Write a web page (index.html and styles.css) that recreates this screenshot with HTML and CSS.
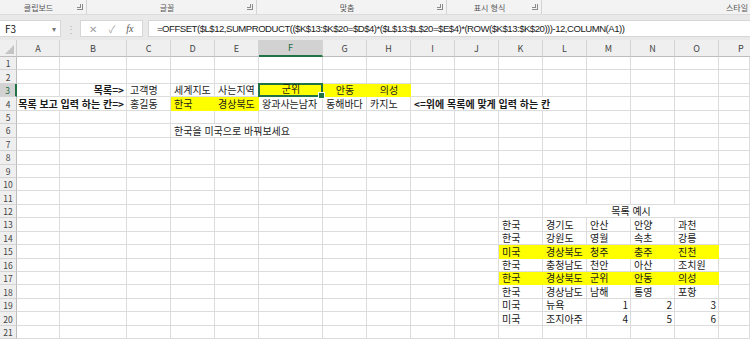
FILE: index.html
```html
<!DOCTYPE html>
<html lang="ko">

<head>
    <meta charset="UTF-8">
    <meta name="viewport" content="width=device-width, initial-scale=1.0">
    <title>통합 문서</title>
    <link rel="stylesheet" href="styles.css">
</head>

<body>
    <div class="ribbon">
        <div class="group group-clipboard"><span class="group-label">클립보드</span><span class="launcher"></span></div>
        <div class="group group-font"><span class="group-label">글꼴</span><span class="launcher"></span></div>
        <div class="group group-align"><span class="group-label">맞춤</span><span class="launcher"></span></div>
        <div class="group group-number"><span class="group-label">표시 형식</span><span class="launcher"></span></div>
        <div class="group group-style"><span class="group-label">스타일</span></div>
    </div>

    <div class="formula-bar">
        <div class="name-box">F3<span class="caret">▾</span></div>
        <div class="grip">⋮</div>
        <div class="fx-buttons">
            <span class="fx-btn">✕</span>
            <span class="fx-btn">✓</span>
            <span class="fx-btn fx-italic">fx</span>
        </div>
        <div class="formula">=OFFSET($L$12,SUMPRODUCT(($K$13:$K$20=$D$4)*($L$13:$L$20=$E$4)*(ROW($K$13:$K$20)))-12,COLUMN(A1))</div>
    </div>

    <div id="sheet" class="sheet"></div>

    <script>
        document.addEventListener('DOMContentLoaded', () => {
            const sheet = document.getElementById('sheet');
            const columns = ['A', 'B', 'C', 'D', 'E', 'F', 'G', 'H', 'I', 'J', 'K', 'L', 'M', 'N', 'O', 'P'];
            const rowCount = 21;

            // 셀 데이터: [열 번호, 텍스트, 병합 칸 수, 추가 클래스]
            const data = {
                3: [[1, '목록=>', 1, 'bold right'], [2, '고객명'], [3, '세계지도'], [4, '사는지역'],
                    [5, '군위', 1, 'yellow center active'], [6, '안동', 1, 'yellow center'], [7, '의성', 1, 'yellow center']],
                4: [[0, '목록 보고 입력 하는 칸=>', 2, 'bold right'], [2, '홍길동'], [3, '한국', 1, 'yellow'],
                    [4, '경상북도', 1, 'yellow'], [5, '왕과사는남자'], [6, '동해바다'], [7, '카지노'],
                    [8, '<=위에 목록에 맞게 입력 하는 칸', 4, 'bold']],
                6: [[3, '한국을 미국으로 바꿔보세요', 3]],
                12: [[11, '목록 예시', 4, 'center']],
                13: [[10, '한국'], [11, '경기도'], [12, '안산'], [13, '안양'], [14, '과천']],
                14: [[10, '한국'], [11, '강원도'], [12, '영월'], [13, '속초'], [14, '강릉']],
                15: [[10, '미국', 1, 'yellow'], [11, '경상북도', 1, 'yellow'], [12, '청주', 1, 'yellow'], [13, '충주', 1, 'yellow'], [14, '진천', 1, 'yellow']],
                16: [[10, '한국'], [11, '충청남도'], [12, '천안'], [13, '아산'], [14, '조치원']],
                17: [[10, '한국', 1, 'yellow'], [11, '경상북도', 1, 'yellow'], [12, '군위', 1, 'yellow'], [13, '안동', 1, 'yellow'], [14, '의성', 1, 'yellow']],
                18: [[10, '한국'], [11, '경상남도'], [12, '남해'], [13, '통영'], [14, '포항']],
                19: [[10, '미국'], [11, '뉴욕'], [12, '1', 1, 'right'], [13, '2', 1, 'right'], [14, '3', 1, 'right']],
                20: [[10, '미국'], [11, '조지아주'], [12, '4', 1, 'right'], [13, '5', 1, 'right'], [14, '6', 1, 'right']]
            };

            const corner = document.createElement('div');
            corner.className = 'corner';
            sheet.appendChild(corner);

            columns.forEach(letter => {
                const head = document.createElement('div');
                head.className = 'col-head' + (letter === 'F' ? ' selected' : '') + (letter === 'P' ? ' clipped' : '');
                head.textContent = letter;
                sheet.appendChild(head);
            });

            for (let r = 1; r <= rowCount; r++) {
                const rowHead = document.createElement('div');
                rowHead.className = 'row-head' + (r === 3 ? ' selected' : '');
                rowHead.textContent = r;
                sheet.appendChild(rowHead);

                const cells = data[r] || [];
                let c = 0;
                while (c < columns.length) {
                    const found = cells.find(item => item[0] === c);
                    const cell = document.createElement('div');
                    cell.className = 'cell';
                    let span = 1;
                    if (found) {
                        span = found[2] || 1;
                        const text = document.createElement('span');
                        text.className = 'value';
                        text.textContent = found[1];
                        cell.appendChild(text);
                        if (found[3]) {
                            found[3].split(' ').forEach(cls => cell.classList.add(cls));
                        }
                        if (span > 1) {
                            cell.style.gridColumn = 'span ' + span;
                        }
                    }
                    sheet.appendChild(cell);
                    c += span;
                }
            }
        });
    </script>
</body>

</html>
```

FILE: styles.css
```css
* {
    box-sizing: border-box;
}

body {
    margin: 0;
    width: 750px;
    height: 339px;
    overflow: hidden;
    background-color: #e9e9e9;
    font-family: "Noto Sans CJK KR", "Noto Sans", sans-serif;
    color: #1a1a1a;
}

/* 리본 하단 그룹 이름 */
.ribbon {
    display: flex;
    height: 15px;
    background-color: #f3f3f3;
    border-bottom: 1px solid #dcdcdc;
    white-space: nowrap;
}

.group {
    display: flex;
    flex-shrink: 0;
    align-items: center;
    height: 14px;
    border-right: 1px solid #d4d4d4;
    padding-right: 3px;
}

.group-label {
    flex: 1;
    text-align: center;
    font-size: 8px;
    color: #555;
}

.launcher {
    width: 6px;
    height: 6px;
    border-right: 1px solid #8a8a8a;
    border-bottom: 1px solid #8a8a8a;
    position: relative;
}

.launcher::before {
    content: "";
    position: absolute;
    left: 0;
    top: 0;
    width: 3px;
    height: 3px;
    border-right: 1px solid #8a8a8a;
    border-bottom: 1px solid #8a8a8a;
}

.group-clipboard {
    width: 87px;
}

.group-font {
    width: 170px;
}

.group-align {
    width: 190px;
}

.group-number {
    width: 95px;
}

.group-style {
    flex: 1;
    flex-shrink: 1;
    min-width: 0;
    border-right: none;
    padding-right: 2px;
}

.group-style .group-label {
    text-align: right;
}

/* 수식 입력줄 */
.formula-bar {
    display: flex;
    align-items: center;
    height: 25px;
    padding: 5px 0 3px;
}

.name-box {
    display: flex;
    align-items: center;
    justify-content: space-between;
    width: 61px;
    height: 17px;
    padding: 0 4px 0 5px;
    background-color: #fff;
    border: 1px solid #d6d6d6;
    border-left: none;
    font-size: 10px;
}

.caret {
    font-size: 8px;
    color: #777;
}

.grip {
    width: 19px;
    text-align: center;
    font-size: 10px;
    color: #b0b0b0;
}

.fx-buttons {
    display: flex;
    align-items: center;
    justify-content: space-around;
    width: 63px;
    height: 17px;
    padding: 0 3px;
    background-color: #fff;
    border: 1px solid #d6d6d6;
    font-size: 10px;
    color: #a0a0a0;
}

.fx-italic {
    font-family: "Liberation Serif", serif;
    font-style: italic;
    color: #555;
}

.formula {
    flex: 1;
    min-width: 0;
    height: 17px;
    margin-left: 5px;
    padding-left: 8px;
    background-color: #fff;
    border: 1px solid #d6d6d6;
    border-right: none;
    font-family: "Liberation Sans", sans-serif;
    font-size: 9.6px;
    letter-spacing: -0.5px;
    line-height: 15px;
    white-space: nowrap;
    overflow: hidden;
}

/* 시트 */
.sheet {
    display: grid;
    grid-template-columns: 17px 43px 67px 44px 44px 44px 64px 44px 44px 44px 44px 44px 44px 44px 44px 44px 31px;
    grid-template-rows: 17px repeat(21, 13.45px);
    width: 750px;
    background-color: #fff;
}

.corner {
    background-color: #efefef;
    border-right: 1px solid #cfcfcf;
    border-bottom: 1px solid #bdbdbd;
    position: relative;
}

.corner::after {
    content: "";
    position: absolute;
    right: 2px;
    bottom: 2px;
    border-left: 9px solid transparent;
    border-bottom: 9px solid #c4c4c4;
}

.col-head {
    display: flex;
    align-items: center;
    justify-content: center;
    background-color: #efefef;
    border-right: 1px solid #d4d4d4;
    border-bottom: 1px solid #bdbdbd;
    font-size: 9px;
    color: #444;
}

.col-head.clipped {
    justify-content: flex-start;
    padding-left: 19px;
    border-right: none;
}

.col-head.selected {
    background-color: #d2d2d2;
    border-bottom: 2px solid #217346;
    color: #1e6b3f;
}

.row-head {
    display: flex;
    align-items: center;
    justify-content: center;
    background-color: #efefef;
    border-right: 1px solid #bdbdbd;
    border-bottom: 1px solid #d4d4d4;
    font-size: 8.5px;
    color: #444;
}

.row-head.selected {
    background-color: #d2d2d2;
    border-right: 2px solid #217346;
    color: #1e6b3f;
}

.cell {
    display: flex;
    align-items: flex-end;
    padding: 0 2px 0 3px;
    border-right: 1px solid #dcdcdc;
    border-bottom: 1px solid #dcdcdc;
    font-size: 10px;
    line-height: 12px;
    white-space: nowrap;
}

.value {
    display: inline-block;
    height: 12px;
}

.cell.bold {
    font-weight: bold;
}

.cell.right {
    justify-content: flex-end;
    padding-right: 2px;
}

.cell.center {
    justify-content: center;
}

.cell.yellow {
    background-color: #ffff00;
    border-color: #ffff00;
}

/* 선택된 셀 F3 */
.cell.active {
    position: relative;
    border: 2px solid #217346;
    margin: -1px 0 0 -1px;
}

.cell.active::after {
    content: "";
    position: absolute;
    right: -4px;
    bottom: -4px;
    width: 5px;
    height: 5px;
    background-color: #217346;
    border: 1px solid #fff;
}
```
